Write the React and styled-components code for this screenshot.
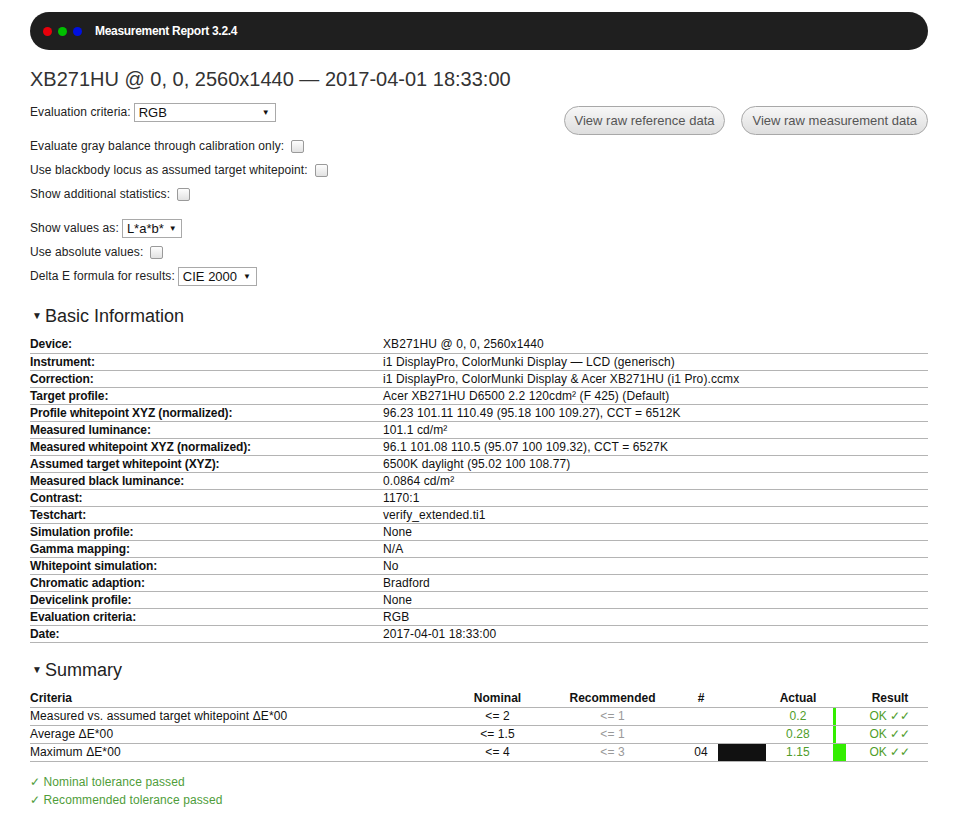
import React from "react";
import styled, { createGlobalStyle } from "styled-components";

const Global = createGlobalStyle`
  html, body { margin: 0; padding: 0; background: #fff; }
  body { font-family: "Liberation Sans", Arial, sans-serif; color: #222; font-size: 12px; letter-spacing: 0.1px; }
`;

const Page = styled.div`
  padding: 12px 30px 20px 30px;
`;

const TitleBar = styled.div`
  height: 38px;
  background: #1f1f1f;
  border-radius: 19px;
  display: flex;
  align-items: center;
  padding-left: 13px;
  gap: 6px;
`;

const Dot = styled.span`
  width: 9px;
  height: 9px;
  border-radius: 50%;
  background: ${(p) => p.$c};
`;

const BarTitle = styled.span`
  color: #fff;
  font-weight: bold;
  font-size: 12px;
  letter-spacing: -0.3px;
  margin-left: 7px;
`;

const H1 = styled.h1`
  margin: 17px 0 9px;
  font-size: 20px;
  line-height: 24px;
  font-weight: normal;
  letter-spacing: 0;
  color: #333;
`;

const Top = styled.div`
  display: flex;
  justify-content: space-between;
  align-items: flex-start;
`;

const Options = styled.div`
  display: flex;
  flex-direction: column;
`;

const Group = styled.div`
  display: flex;
  flex-direction: column;
  margin-top: ${(p) => p.$gap || 0}px;
`;

const OptRow = styled.div`
  height: 24px;
  display: flex;
  align-items: center;
  color: #222;
  white-space: nowrap;
`;

const Check = styled.span`
  width: 11px;
  height: 11px;
  margin-left: 7px;
  border: 1px solid #9a9a9a;
  border-radius: 2px;
  background: linear-gradient(#fdfdfd, #e2e2e2);
`;

const Select = styled.span`
  display: inline-flex;
  align-items: center;
  justify-content: space-between;
  box-sizing: border-box;
  width: ${(p) => p.$w}px;
  height: 19px;
  margin-left: 3px;
  border: 1px solid #a9a9a9;
  background: #fff;
  padding: 0 5px 0 4px;
  font-size: 13px;
  letter-spacing: 0;
  color: #111;
  white-space: nowrap;
`;

const Arrow = styled.span`
  font-size: 8px;
  color: #111;
  margin-left: 5px;
`;

const Buttons = styled.div`
  display: flex;
  gap: 16px;
  margin-top: 6px;
`;

const Button = styled.button`
  height: 29px;
  padding: 0 10px;
  border: 1px solid #a8a8a8;
  border-radius: 15px;
  background: linear-gradient(#f7f7f7, #dedede);
  color: #555;
  font-family: "Liberation Sans", Arial, sans-serif;
  font-size: 13px;
  letter-spacing: 0;
`;

const SectionHead = styled.h2`
  margin: ${(p) => p.$mt}px 0 ${(p) => p.$mb}px;
  font-size: 18px;
  line-height: 24px;
  font-weight: normal;
  letter-spacing: 0;
  color: #222;
  display: flex;
  align-items: center;
`;

const Tri = styled.span`
  font-size: 10px;
  margin-left: 2px;
  margin-right: 3px;
`;

const Table = styled.table`
  width: 100%;
  border-collapse: collapse;
  table-layout: fixed;
`;

const InfoRow = styled.tr`
  height: 17px;
  border-bottom: 1px solid #b4b4b4;
`;

const Label = styled.td`
  width: 353px;
  padding: 0;
  font-weight: bold;
  letter-spacing: -0.1px;
  color: #111;
  line-height: 16px;
`;

const Value = styled.td`
  padding: 0;
  color: #111;
  line-height: 16px;
`;

const SumHead = styled.th`
  padding: 0;
  height: 17px;
  font-weight: bold;
  letter-spacing: 0;
  color: #111;
  text-align: ${(p) => p.$align || "center"};
  border-bottom: 1px solid #b4b4b4;
`;

const SumRow = styled.tr`
  border-bottom: 1px solid #b4b4b4;
`;

const Cell = styled.td`
  padding: 0;
  height: 17px;
  line-height: 16px;
  text-align: ${(p) => p.$align || "center"};
  color: ${(p) => p.$color || "#111"};
  vertical-align: middle;
`;

const SwatchCell = styled.td`
  padding: 0 6px;
  height: 17px;
`;

const Swatch = styled.div`
  height: 17px;
  background: #111;
`;

const BarCell = styled.td`
  padding: 0 0 0 9px;
  height: 17px;
`;

const Bar = styled.div`
  height: 17px;
  background: #33ee00;
`;

const Passed = styled.div`
  color: #4f9d3a;
  line-height: 18px;
  margin-top: ${(p) => p.$mt || 0}px;
`;

const info = [
  ["Device:", "XB271HU @ 0, 0, 2560x1440"],
  ["Instrument:", "i1 DisplayPro, ColorMunki Display — LCD (generisch)"],
  ["Correction:", "i1 DisplayPro, ColorMunki Display & Acer XB271HU (i1 Pro).ccmx"],
  ["Target profile:", "Acer XB271HU D6500 2.2 120cdm² (F 425) (Default)"],
  ["Profile whitepoint XYZ (normalized):", "96.23 101.11 110.49 (95.18 100 109.27), CCT = 6512K"],
  ["Measured luminance:", "101.1 cd/m²"],
  ["Measured whitepoint XYZ (normalized):", "96.1 101.08 110.5 (95.07 100 109.32), CCT = 6527K"],
  ["Assumed target whitepoint (XYZ):", "6500K daylight (95.02 100 108.77)"],
  ["Measured black luminance:", "0.0864 cd/m²"],
  ["Contrast:", "1170:1"],
  ["Testchart:", "verify_extended.ti1"],
  ["Simulation profile:", "None"],
  ["Gamma mapping:", "N/A"],
  ["Whitepoint simulation:", "No"],
  ["Chromatic adaption:", "Bradford"],
  ["Devicelink profile:", "None"],
  ["Evaluation criteria:", "RGB"],
  ["Date:", "2017-04-01 18:33:00"],
];

const summary = [
  { c: "Measured vs. assumed target whitepoint ΔE*00", n: "<= 2", r: "<= 1", a: "0.2", bar: 3 },
  { c: "Average ΔE*00", n: "<= 1.5", r: "<= 1", a: "0.28", bar: 3 },
  { c: "Maximum ΔE*00", n: "<= 4", r: "<= 3", a: "1.15", bar: 13, num: "04", sw: true },
];

export default function App() {
  return (
    <>
      <Global />
      <Page>
        <TitleBar>
          <Dot $c="#e8000b" />
          <Dot $c="#00c000" />
          <Dot $c="#0010e0" />
          <BarTitle>Measurement Report 3.2.4</BarTitle>
        </TitleBar>
        <H1>XB271HU @ 0, 0, 2560x1440 — 2017-04-01 18:33:00</H1>
        <Top>
          <Options>
            <Group>
              <OptRow>
                Evaluation criteria:
                <Select $w={142}>RGB<Arrow>▼</Arrow></Select>
              </OptRow>
            </Group>
            <Group $gap={10}>
              <OptRow>Evaluate gray balance through calibration only:<Check /></OptRow>
              <OptRow>Use blackbody locus as assumed target whitepoint:<Check /></OptRow>
              <OptRow>Show additional statistics:<Check /></OptRow>
            </Group>
            <Group $gap={10}>
              <OptRow>
                Show values as:
                <Select $w={60}>L*a*b*<Arrow>▼</Arrow></Select>
              </OptRow>
              <OptRow>Use absolute values:<Check /></OptRow>
              <OptRow>
                Delta E formula for results:
                <Select $w={79}>CIE 2000<Arrow>▼</Arrow></Select>
              </OptRow>
            </Group>
          </Options>
          <Buttons>
            <Button>View raw reference data</Button>
            <Button>View raw measurement data</Button>
          </Buttons>
        </Top>

        <SectionHead $mt={16} $mb={8}><Tri>▼</Tri>Basic Information</SectionHead>
        <Table>
          <tbody>
            {info.map(([l, v]) => (
              <InfoRow key={l}>
                <Label>{l}</Label>
                <Value>{v}</Value>
              </InfoRow>
            ))}
          </tbody>
        </Table>

        <SectionHead $mt={15} $mb={8}><Tri>▼</Tri>Summary</SectionHead>
        <Table>
          <colgroup>
            <col style={{ width: 430 }} />
            <col style={{ width: 75 }} />
            <col style={{ width: 155 }} />
            <col style={{ width: 22 }} />
            <col style={{ width: 60 }} />
            <col style={{ width: 52 }} />
            <col style={{ width: 28 }} />
            <col style={{ width: 76 }} />
          </colgroup>
          <thead>
            <tr>
              <SumHead $align="left">Criteria</SumHead>
              <SumHead>Nominal</SumHead>
              <SumHead>Recommended</SumHead>
              <SumHead>#</SumHead>
              <SumHead />
              <SumHead>Actual</SumHead>
              <SumHead />
              <SumHead>Result</SumHead>
            </tr>
          </thead>
          <tbody>
            {summary.map((s) => (
              <SumRow key={s.c}>
                <Cell $align="left">{s.c}</Cell>
                <Cell>{s.n}</Cell>
                <Cell $color="#999">{s.r}</Cell>
                <Cell>{s.num || ""}</Cell>
                <SwatchCell>{s.sw && <Swatch />}</SwatchCell>
                <Cell $color="#4f9d2a">{s.a}</Cell>
                <BarCell><Bar style={{ width: s.bar }} /></BarCell>
                <Cell $color="#4f9d2a">OK ✓✓</Cell>
              </SumRow>
            ))}
          </tbody>
        </Table>
        <Passed $mt={11}>✓ Nominal tolerance passed</Passed>
        <Passed>✓ Recommended tolerance passed</Passed>
      </Page>
    </>
  );
}
